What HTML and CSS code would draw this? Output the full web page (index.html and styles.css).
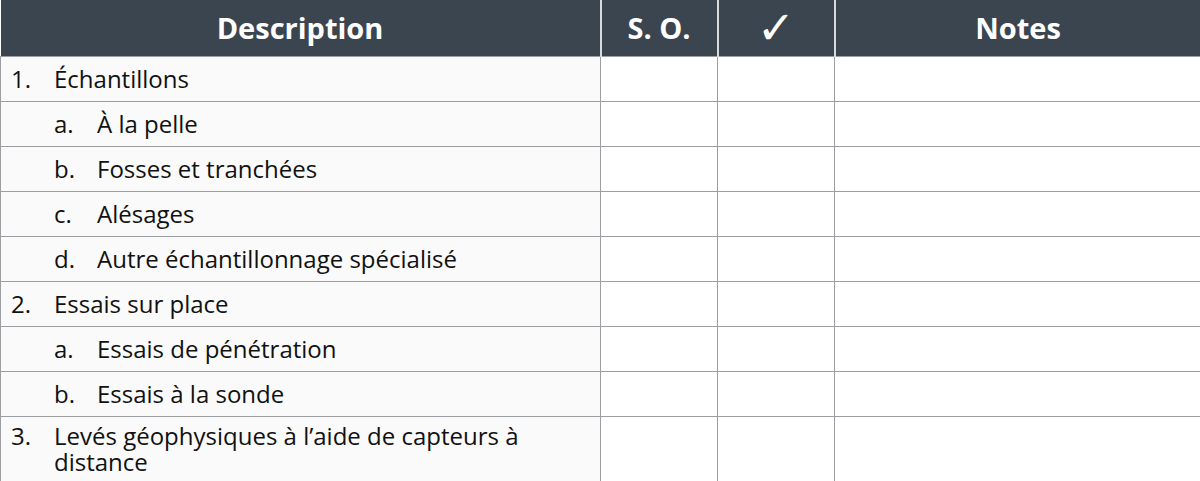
FILE: index.html
```html
<!DOCTYPE html>
<html lang="fr">
<head>
<meta charset="utf-8">
<link rel="stylesheet" href="styles.css">
</head>
<body>
<table class="checklist">
  <colgroup>
    <col class="c-desc"><col class="c-so"><col class="c-check"><col class="c-notes">
  </colgroup>
  <thead>
    <tr>
      <th>Description</th>
      <th>S. O.</th>
      <th class="check">✓</th>
      <th>Notes</th>
    </tr>
  </thead>
  <tbody>
    <tr><td class="desc"><div class="item"><span class="num">1.</span><span class="txt">Échantillons</span></div></td><td></td><td></td><td></td></tr>
    <tr><td class="desc"><div class="item sub"><span class="num">a.</span><span class="txt">À la pelle</span></div></td><td></td><td></td><td></td></tr>
    <tr><td class="desc"><div class="item sub"><span class="num">b.</span><span class="txt">Fosses et tranchées</span></div></td><td></td><td></td><td></td></tr>
    <tr><td class="desc"><div class="item sub"><span class="num">c.</span><span class="txt">Alésages</span></div></td><td></td><td></td><td></td></tr>
    <tr><td class="desc"><div class="item sub"><span class="num">d.</span><span class="txt">Autre échantillonnage spécialisé</span></div></td><td></td><td></td><td></td></tr>
    <tr><td class="desc"><div class="item"><span class="num">2.</span><span class="txt">Essais sur place</span></div></td><td></td><td></td><td></td></tr>
    <tr><td class="desc"><div class="item sub"><span class="num">a.</span><span class="txt">Essais de pénétration</span></div></td><td></td><td></td><td></td></tr>
    <tr><td class="desc"><div class="item sub"><span class="num">b.</span><span class="txt">Essais à la sonde</span></div></td><td></td><td></td><td></td></tr>
    <tr class="tall"><td class="desc"><div class="item"><span class="num">3.</span><span class="txt">Levés géophysiques à l’aide de capteurs à distance</span></div></td><td></td><td></td><td></td></tr>
  </tbody>
</table>
</body>
</html>
```
FILE: styles.css
```css
html, body {
  margin: 0;
  padding: 0;
  background: #ffffff;
}
body {
  font-family: "Open Sans", "DejaVu Sans", sans-serif;
  color: #111111;
}
.checklist {
  width: 1200px;
  border-collapse: collapse;
  table-layout: fixed;
}
.c-desc { width: 600px; }
.c-so { width: 117px; }
.c-check { width: 117px; }
.c-notes { width: 366px; }

.checklist th {
  background: #3b4550;
  color: #ffffff;
  font-weight: 700;
  font-size: 29px;
  line-height: 32px;
  height: 56px;
  padding: 0;
  text-align: center;
  vertical-align: middle;
  border-left: 2px solid #d8dadc;
  box-sizing: border-box;
}
.checklist th:first-child { border-left: none; }
.checklist th.check {
  font-family: "DejaVu Sans", sans-serif;
  font-weight: 400;
  font-size: 46px;
  line-height: 32px;
}
.checklist td {
  height: 45px;
  padding: 0;
  border: 1px solid #9c9ea1;
  background: #ffffff;
  box-sizing: border-box;
  vertical-align: middle;
}
.checklist td.desc {
  background: #fafafa;
}
.checklist tr.tall td { height: 66px; }

.item {
  display: flex;
  font-size: 24px;
  line-height: 26px;
  padding-left: 10px;
  padding-right: 20px;
}
.item.sub { padding-left: 53px; }
.num {
  flex: 0 0 43px;
}
.txt {
  flex: 1 1 auto;
}
```
